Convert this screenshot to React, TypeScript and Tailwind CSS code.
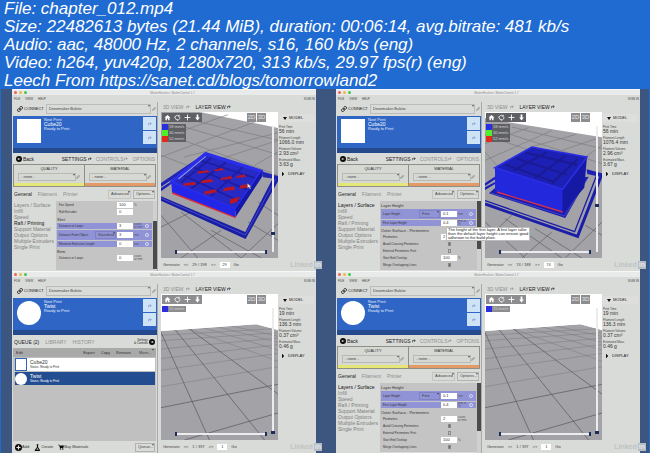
import { ReactNode, useState } from 'react';

type Scene = 'low' | 'tall' | 'empty';

interface Setting {
  label: string;
  size?: 'heading' | 'normal' | 'tall';
  value?: string;
  unit?: string;
  preset?: string;
  changed?: boolean;
  check?: boolean;
}

interface Chapter {
  id: string;
  part: string;
  round?: boolean;
  scene: Scene;
  panel: 'settings' | 'queue';
  category?: string;
  settings?: Setting[];
  thumbClass?: string;
  stats: string[];
  layer: string;
  layerCount: string;
  layerPos: number;
  tooltip?: boolean;
}

const categories = [
  'Layers / Surface',
  'Infill',
  'Speed',
  'Raft / Priming',
  'Support Material',
  'Output Options',
  'Multiple Extruders',
  'Single Print',
];

const raftSettings: Setting[] = [
  { label: 'Fan Speed', value: '100', unit: '%' },
  { label: 'Raft Extruder', value: '0' },
  { label: 'Skirt', size: 'heading' },
  { label: 'Distance or Loops', value: '3', unit: 'count or mm', changed: true },
  { label: 'Distance From Object', size: 'tall', value: '3', unit: 'mm', preset: 'Standard', changed: true },
  { label: 'Minimum Extrusion Length', value: '0', unit: 'mm', changed: true },
  { label: 'Brim', size: 'heading' },
  { label: 'Distance or Loops', value: '0', unit: 'count or mm' },
];

const layerSettings: Setting[] = [
  { label: 'Layer Height', size: 'heading' },
  { label: 'Layer Height', size: 'tall', value: '0.1', unit: 'mm', preset: 'Fine', changed: true },
  { label: 'First Layer Height', value: '0.4', unit: 'mm or %', changed: true },
  { label: 'Outer Surface - Perimeters', size: 'heading' },
  { label: 'Perimeters', value: '2', unit: 'count or mm' },
  { label: 'Avoid Crossing Perimeters', check: true },
  { label: 'External Perimeters First', check: false },
  { label: 'Start End Overlap', value: '100', unit: '%' },
  { label: 'Merge Overlapping Lines', check: true },
];

const chapters: Chapter[] = [
  {
    id: 'a',
    part: 'Cube20',
    scene: 'low',
    panel: 'settings',
    category: 'Raft / Priming',
    settings: raftSettings,
    thumbClass: 'mt-5 h-12',
    stats: ['56 min', '1066.0 mm', '2.93 cm³', '3.63 g'],
    layer: '29',
    layerCount: '29 / 198',
    layerPos: 14,
  },
  {
    id: 'b',
    part: 'Cube20',
    scene: 'tall',
    panel: 'settings',
    category: 'Layers / Surface',
    settings: layerSettings,
    thumbClass: 'h-12',
    stats: ['56 min', '1076.4 mm', '2.96 cm³', '3.67 g'],
    layer: '74',
    layerCount: '74 / 188',
    layerPos: 37,
    tooltip: true,
  },
  {
    id: 'c',
    part: 'Twist',
    round: true,
    scene: 'empty',
    panel: 'queue',
    stats: ['19 min', '136.3 mm', '0.37 cm³', '0.46 g'],
    layer: '1',
    layerCount: '1 / 397',
    layerPos: 0,
  },
  {
    id: 'd',
    part: 'Twist',
    round: true,
    scene: 'empty',
    panel: 'settings',
    category: 'Layers / Surface',
    settings: layerSettings,
    thumbClass: 'h-12',
    stats: ['19 min', '136.3 mm', '0.37 cm³', '0.46 g'],
    layer: '1',
    layerCount: '1 / 397',
    layerPos: 0,
  },
];

function LinkIcon() {
  return (
    <svg className="w-[6px] h-[6px] shrink-0" viewBox="0 0 24 24" fill="none" stroke="#1c1c1c" strokeWidth={4} strokeLinecap="round">
      <path d="M10 14a5 5 0 0 0 7 0l4-4a5 5 0 0 0-7-7l-2 2" />
      <path d="M14 10a5 5 0 0 0-7 0l-4 4a5 5 0 0 0 7 7l2-2" />
    </svg>
  );
}

function PopOutIcon() {
  return (
    <svg className="w-[4px] h-[4px] shrink-0" viewBox="0 0 12 12" fill="none" stroke="currentColor" strokeWidth={2}>
      <path d="M1 10V5h8M6 1l4 4-4 3" />
    </svg>
  );
}

function EditIcon() {
  return (
    <svg className="w-[4px] h-[4px] shrink-0" viewBox="0 0 12 12" fill="none" stroke="#7d7d7d" strokeWidth={2}>
      <path d="M2 10l1-3 6-6 2 2-6 6z" />
    </svg>
  );
}

function ArrowDisc({ flip }: { flip?: boolean }) {
  return (
    <svg className="w-[6px] h-[6px] shrink-0" viewBox="0 0 24 24">
      <circle cx="12" cy="12" r="12" fill="#0b0b0b" />
      <path d={flip ? 'M7 12h9M13 8l4 4-4 4' : 'M17 12H8M11 8l-4 4 4 4'} fill="none" stroke="#e8e8e8" strokeWidth={3} />
    </svg>
  );
}

function PickList({ label, options, className }: { label: string; options: string[]; className: string }) {
  return (
    <span className={`relative flex items-center ${className}`}>
      <select aria-label={label} className="w-full h-full appearance-none bg-transparent pl-[2px] text-[4px] leading-[6px] text-[#444]">
        {options.map((o) => (
          <option key={o}>{o}</option>
        ))}
      </select>
      <svg className="absolute right-0 top-0 w-[2px] h-[2px] pointer-events-none" viewBox="0 0 6 4">
        <path d="M0 0h6L3 4z" fill="#333" />
      </svg>
    </span>
  );
}

function PrintCard({ part, round }: { part: string; round?: boolean }) {
  return (
    <div className="bg-[#2f66c5] border-b-[5px] border-[#24498c] h-[37px] flex items-start pl-1 pr-px ml-px">
      <div className={`mt-[3px] w-6 h-6 shrink-0 bg-white ${round ? 'rounded-full' : ''}`} />
      <div className="ml-[3px] pt-[2px] flex-1 text-[#e4ecfa] text-[4px] leading-[4px]">
        <p>Next Print</p>
        <p className="text-[5px] leading-[5px] text-white">{part}</p>
        <p>Ready to Print</p>
      </div>
      <div className="flex flex-col gap-px pt-px">
        {['Edit part', 'Export part'].map((name) => (
          <button key={name} aria-label={name} className="w-[13px] h-[13px] bg-[#cfe3f7] flex items-center justify-center text-[#6a94cf]">
            <PopOutIcon />
          </button>
        ))}
      </div>
    </div>
  );
}

function SettingRow({ row }: { row: Setting }) {
  if (row.size === 'heading') {
    return <h3 className="h-[7px] flex items-center px-px text-[4px] leading-[4px] text-[#333]">{row.label}</h3>;
  }
  return (
    <label
      className={`flex items-center mx-px mb-px pl-[2px] pr-[2px] text-[3px] leading-[3px] text-[#333] ${
        row.size === 'tall' ? 'h-[10px]' : 'h-[6px]'
      } ${row.changed ? 'bg-[#9094d6]' : ''}`}
    >
      <span className="flex-1">{row.label}</span>
      {row.preset && <PickList label={`${row.label} preset`} options={[row.preset]} className="w-[21px] h-2 mr-px border border-[#7f83c4]" />}
      {row.check === undefined ? (
        <input type="text" defaultValue={row.value} className="w-4 h-[6px] bg-white pl-[2px] text-[4px] leading-[6px] text-[#333]" />
      ) : (
        <span className="w-4 flex justify-center">
          <input
            type="checkbox"
            defaultChecked={row.check}
            className="appearance-none w-[3px] h-[4px] border border-[#8a8a8a] checked:bg-[#6a6a6a]"
          />
        </span>
      )}
      <span className="w-[11px] pl-px text-[#555]">{row.unit}</span>
      <span className="w-[6px] flex justify-center">
        {row.changed && <span className="w-[4px] h-[4px] rounded-full border border-[#d6d8f4]" />}
      </span>
    </label>
  );
}

function SettingsPanel({ chapter }: { chapter: Chapter }) {
  const [category, setCategory] = useState(chapter.category);

  return (
    <>
      <nav className="h-[11px] flex items-center gap-1 pl-1 pr-[2px] text-[5px] leading-[6px] text-[#909090]">
        <button className="mr-auto flex items-center gap-px text-[#222]">
          <ArrowDisc />
          Back
        </button>
        <button className="flex items-center gap-px text-[#222]">SETTINGS<PopOutIcon /></button>
        <button className="flex items-center gap-px">CONTROLS<PopOutIcon /></button>
        <button>OPTIONS</button>
      </nav>

      {/* Presets */}
      <div className="h-[23px] grid grid-cols-2 gap-px border border-[#8f8f88] bg-[#8f8f88] mx-px text-[4px] leading-[6px] text-[#333]">
        <div className="bg-[#d6d8d4] border-b-[3px] border-[#e4e676] pt-px px-1">
          <p className="text-center">QUALITY</p>
          <div className="flex items-center mt-px">
            <PickList label="Quality" options={['- none -']} className="flex-1 h-[8px] border border-[#b9b9b6]" />
            <EditIcon />
          </div>
        </div>
        <div className="bg-[#d6d8d4] border-b-[3px] border-[#e39a66] pt-px px-1">
          <p className="text-center">MATERIAL</p>
          <div className="flex items-center mt-px">
            <PickList label="Material" options={['- none -']} className="flex-1 h-[8px] border border-[#b9b9b6]" />
            <EditIcon />
          </div>
        </div>
      </div>

      <div className="h-[14px] flex items-center gap-[6px] pl-[2px] pr-[2px] text-[5px] leading-[6px] text-[#8d8d8d]">
        <button className="text-[#222]">General</button>
        <button>Filament</button>
        <button>Printer</button>
        <div className="ml-auto flex gap-[2px] text-[4px] text-[#333]">
          <PickList label="Detail level" options={['Advanced']} className="w-[23px] h-[9px] border border-[#c4c4c2]" />
          <PickList label="Options" options={['Options...']} className="w-[22px] h-[9px] border border-[#b2b2b0]" />
        </div>
      </div>

      <div className="h-[70px] flex overflow-hidden">
        <ul className="flex-1 pl-[2px] pt-px text-[5px] leading-[6px] text-[#7f7f7f] whitespace-nowrap">
          {categories.map((name) => (
            <li key={name} className="h-[6px]">
              <button onClick={() => setCategory(name)} className={`block ${name === category ? 'text-[#111]' : ''}`}>
                {name}
              </button>
            </li>
          ))}
        </ul>
        <div className="w-[97px] bg-[#c4c4c4] mb-px pt-px overflow-hidden">
          {chapter.settings?.map((row, i) => (
            <SettingRow key={i} row={row} />
          ))}
        </div>
        <div className="w-[4px] bg-[#d0d0d0]">
          <div className={`bg-[#4b4b4b] ${chapter.thumbClass}`} />
        </div>
      </div>
    </>
  );
}

function QueuePanel() {
  return (
    <>
      <nav className="h-[13px] flex items-center gap-[6px] pl-[2px] pr-[2px] text-[5px] leading-[6px] text-[#909090]">
        <button className="text-[#222]">QUEUE (2)</button>
        <button>LIBRARY</button>
        <button>HISTORY</button>
        <button className="ml-auto flex items-center gap-px text-right text-[3px] leading-[3px] text-[#222]">
          <span>Settings<br />&amp; Controls</span>
          <ArrowDisc flip />
        </button>
      </nav>
      <div className="flex-1 bg-[#c0c0c0] mx-px flex flex-col">
        <div className="h-[9px] bg-[#a9a9a9] flex items-center gap-[6px] pl-[3px] pr-[2px] text-[4px] leading-[6px] text-[#333]">
          <button>Edit</button>
          <button className="ml-auto">Export</button>
          <button>Copy</button>
          <button>Remove</button>
          <PickList label="More" options={['More...']} className="w-[17px] h-2" />
        </div>
        <ul className="p-px pl-[2px] flex flex-col gap-px text-[5px] leading-[5px]">
          <li className="h-[13px] bg-white flex items-center text-[#333]">
            <span className="w-3 h-[13px] border border-[#2d64b8] bg-white" />
            <div className="pl-[3px]">
              <p>Cube20</p>
              <p className="text-[3px] leading-[4px]">Status: Ready to Print</p>
            </div>
          </li>
          <li className="h-[13px] bg-[#234d91] flex items-center text-white">
            <span className="w-3 h-3 rounded-full bg-white" />
            <div className="pl-[3px]">
              <p>Twist</p>
              <p className="text-[3px] leading-[4px]">Status: Ready to Print</p>
            </div>
          </li>
        </ul>
      </div>
      <div className="h-3 flex items-center gap-[5px] pl-[3px] pr-[2px] text-[4px] leading-[6px] text-[#333]">
        <button className="flex items-center">
          <svg className="w-[7px] h-[7px]" viewBox="0 0 24 24">
            <circle cx="12" cy="12" r="12" fill="#0b0b0b" />
            <path d="M12 5v14M5 12h14" stroke="#e8e8e8" strokeWidth={4} />
          </svg>
          Add
        </button>
        <button className="flex items-center">
          <svg className="w-[7px] h-[7px]" viewBox="0 0 24 24" fill="#0b0b0b">
            <path d="M9 1h6v3h-1v7l7 10-2 3H4l-2-3 8-10V4H9z" />
            <path d="M8 19l3-5 5 6z" fill="#dcdcdc" />
          </svg>
          Create
        </button>
        <button className="flex items-center">
          <svg className="w-[6px] h-[6px]" viewBox="0 0 24 24" fill="#0b0b0b">
            <path d="M0 3h5l1 3h18l-3 10H8L4 5H0z" />
            <circle cx="10" cy="20" r="3" />
            <circle cx="19" cy="20" r="3" />
          </svg>
          Buy Materials
        </button>
        <PickList label="Queue" options={['Queue...']} className="ml-auto w-5 h-[9px] border border-[#b2b2b0]" />
      </div>
    </>
  );
}

function PrintBed({ scene }: { scene: Scene }) {
  if (scene === 'empty') {
    return (
      <svg className="w-full h-full" viewBox="0 0 350 438" preserveAspectRatio="none">
        <path d="M0 111L285 91l65 17v330H0z" fill="#a3a2a6" />
        <g stroke="#7c7b80" strokeWidth={1.5} fill="none">
          <path d="M0 124L340 104M0 140L350 116M0 165L350 132M0 194L350 152M0 229L350 178M0 278L350 218" />
          <path d="M85 105L350 202M130 102L350 168M172 99L350 145M212 96L350 127" />
        </g>
        <g stroke="#55545a" strokeWidth={2} fill="none">
          <path d="M0 341L350 271M70 438L350 357M0 115L145 438M43 108L310 438M85 105L350 300" />
        </g>
        <path d="M350 108L285 91 0 111V0h350z" fill="#fff" />
      </svg>
    );
  }

  if (scene === 'low') {
    return (
      <svg className="w-full h-full" viewBox="0 0 350 438" preserveAspectRatio="none">
        <path d="M0 0h116l234 48v390H0z" fill="#a3a2a6" />
        <g stroke="#7c7b80" strokeWidth={2} fill="none">
          <path d="M80 22L350 84M75 46L350 128M0 60L350 190M0 130L130 180M0 80L200 8M0 135L290 26M70 135L350 62M180 140L350 85M280 160L350 120" />
          <path d="M0 310L110 438M60 300L240 438M150 355L300 438M0 345L90 300M60 438L180 355M240 438L350 335M260 330L350 385M290 270L350 310" stroke="#5e5d62" />
        </g>
        {/* skirt */}
        <path d="M0 213L120 132l8 8L0 224zM0 228L34 206v8L0 238zM300 178l50 14v10l-44-6z" fill="#2024b4" />
        <path d="M0 253L252 360 336 196h14v12L253 381 0 266z" fill="#1a1ea6" />
        <path d="M0 258L252 369 344 200" stroke="#5c62d6" strokeWidth={2} fill="none" />
        <path d="M33 238L223 308v11L33 245z" fill="#e0283c" />
        {/* walls and infill */}
        <path d="M31 211L133 125l168 53-78 115z" fill="#2629c4" />
        <g stroke="#1d1d9e" strokeWidth={5} fill="none">
          <path d="M66 190L235 268M96 166L262 235M122 146L286 200M90 230L196 150M150 252L244 166M60 212L150 138" />
        </g>
        <path
          d="M112 178l28-3 6 6-38 4zM158 173l24-5 8 6-30 4zM70 214l30-5 6 9-42 4zM124 205l28-4 5 9-40 4zM180 198l30-6 5 8-38 4zM228 192l22-5 4 8-30 3zM132 238l30-6 6 9-40 7zM190 228l28-5 4 10-38 5zM238 220l26-5-4 12-26 3zM206 262l30-8-8 16-22 6z"
          fill="#b5182a"
        />
        <path d="M31 211L133 125l168 53-78 115z" fill="none" stroke="#2a2eea" strokeWidth={10} strokeLinejoin="round" />
        <path d="M52 201L134 133" stroke="#9296e6" strokeWidth={3} />
        <path d="M31 213L223 290v25L33 240z" fill="#2226e8" />
        <path d="M223 290L301 178l3 14-80 122z" fill="#1418aa" />
        <path d="M258 214l1 15 4-4 3 7 3-2-3-6h5z" fill="#e8e8f4" stroke="#333" strokeWidth={1} />
      </svg>
    );
  }

  return (
    <svg className="w-full h-full" viewBox="0 0 350 438" preserveAspectRatio="none">
      <path d="M0 18L70 31 350 76v362H0z" fill="#a3a2a6" />
      <g stroke="#7c7b80" strokeWidth={2} fill="none">
        <path d="M80 45L350 110M60 62L350 155M0 70L180 130M0 120L40 165M0 95L130 47M0 145L200 56M140 104L270 68M230 115L340 78M300 135L350 100" />
        <path d="M0 330L120 438M60 320L230 438M150 350L290 438M0 385L80 310M110 438L200 360M240 438L350 330M300 340L350 370" stroke="#5e5d62" />
      </g>
      <path d="M0 214L36 190v8L0 222zM0 226l30-16v6L0 234zM304 172l46 12v12l-44-10z" fill="#1c20b8" />
      <path d="M0 276L277 373 348 190" fill="none" stroke="#1a1ea8" strokeWidth={9} />
      <path d="M0 266L268 359 334 190" fill="none" stroke="#1a1ea8" strokeWidth={4} />
      <path d="M12 244L30 228l280-34L240 318z" fill="#1a1eb0" />
      <path d="M18 243L238 312 308 198" fill="none" stroke="#5257cf" strokeWidth={2} />
      <path d="M30 167L232 232v68L30 236z" fill="#2428dc" />
      <path d="M232 232l73-97-8 92-65 75z" fill="#1619a4" />
      <path d="M30 167L140 105l165 30-73 97z" fill="#1d20b4" />
      <path d="M62 158L210 211M95 140L244 188M122 122L276 158M85 176L184 121M150 198L240 132M200 214L276 142" stroke="#1a1a92" strokeWidth={6} fill="none" />
      <path d="M30 167L140 105l165 30-73 97z" fill="none" stroke="#2a2ee4" strokeWidth={5} />
      <path d="M36 240L232 300" stroke="#d8304e" strokeWidth={4} />
    </svg>
  );
}

const thumb =
  '[&::-webkit-slider-thumb]:appearance-none [&::-webkit-slider-thumb]:bg-[#1c2c58] [&::-webkit-slider-thumb]:pointer-events-auto';

function ViewTools({ dark }: { dark: boolean }) {
  const tone = dark ? 'bg-[#5f6064]' : 'bg-[#8d8d8f]';
  const shapes: [string, ReactNode][] = [
    ['Home', <path key="p" d="M12 3L2 12h3v9h5v-6h4v6h5v-9h3z" fill="#fff" />],
    ['Rotate', <path key="p" d="M5 8a8 8 0 0 1 13-1M20 10a8 8 0 0 1-5 10M11 20a8 8 0 0 1-7-8M18 3v5h-5M12 17l2 4-4 1M7 10l-3-2-2 5" fill="none" stroke="#fff" strokeWidth={2.5} />],
    ['Pan', <path key="p" d="M12 2v20M2 12h20" stroke="#fff" strokeWidth={3} />],
    ['Zoom', <path key="p" d="M9 2h6v10h5l-8 10-8-10h5z" fill="#fff" />],
  ];

  return (
    <>
      <div className={`absolute left-px top-px flex ${tone}`}>
        {shapes.map(([name, shape]) => (
          <button key={name} aria-label={name} className="w-[10px] h-[9px] flex items-center justify-center">
            <svg className="w-[7px] h-[7px]" viewBox="0 0 24 24">{shape}</svg>
          </button>
        ))}
      </div>
      <div className="absolute right-3 top-px flex gap-px text-[6px] leading-[9px] text-[#e4e4e4]">
        <button className="w-[9px] bg-[#8d8d8f]">2D</button>
        <button className="w-[9px] bg-[#8d8d8f]">3D</button>
      </div>
    </>
  );
}

function Viewer({ chapter }: { chapter: Chapter }) {
  const dark = chapter.scene !== 'empty';
  const speeds = dark
    ? [
        ['18 mm/s', 'bg-[#2a2ee0]'],
        ['30 mm/s', 'bg-[#4df02a]'],
        ['52 mm/s', 'bg-[#e02a1c]'],
      ]
    : [['15 mm/s', 'bg-[#2a2ee0]']];
  const labels = ['Print Time', 'Filament Length', 'Filament Volume', 'Estimated Mass'];

  return (
    <div className="flex-1 min-w-0 flex flex-col pl-[3px]">
      <nav className="h-[10px] flex items-center gap-[6px] pl-[2px] text-[5px] leading-[6px] text-[#8d8d8d]">
        <button className="flex items-center gap-[2px]">3D VIEW<PopOutIcon /></button>
        <button className="flex items-center gap-px text-[#222]">LAYER VIEW<PopOutIcon /></button>
      </nav>
      <div className="flex-1 min-h-0 flex">
        <div className="relative flex-1 min-w-0 bg-white">
          <div className="absolute inset-0">
            <PrintBed scene={chapter.scene} />
          </div>
          <ViewTools dark={dark} />
          <ul className={`absolute left-px top-3 ${dark ? 'bg-[#5f6064]' : 'bg-[#8d8d8f]'} text-[4px] leading-[6px] text-[#d4d4d4]`}>
            {speeds.map(([speed, color]) => (
              <li key={speed} className="flex h-[6px] w-[24px] whitespace-nowrap">
                <span className={`w-[6px] mr-px ${color}`} />
                {speed}
              </li>
            ))}
          </ul>
          <input
            type="range"
            aria-label="Layer"
            defaultValue={chapter.layerPos}
            className={`absolute right-[4px] top-[14px] bottom-[6px] w-[2px] appearance-none bg-[#ececee] [writing-mode:vertical-lr] [direction:rtl] [&::-webkit-slider-thumb]:w-[4px] [&::-webkit-slider-thumb]:h-[3px] [&::-webkit-slider-thumb]:-ml-px ${thumb}`}
          />
          {[0, 100].map((end) => (
            <input
              key={end}
              type="range"
              aria-label={end ? 'Range end' : 'Range start'}
              defaultValue={end}
              className={`absolute left-[14px] w-[92px] bottom-[5px] h-[2px] appearance-none pointer-events-none [&::-webkit-slider-thumb]:w-[2px] [&::-webkit-slider-thumb]:h-[4px] ${
                end ? 'bg-transparent' : 'bg-[#ececee]'
              } ${thumb}`}
            />
          ))}
        </div>
        <aside className="w-[38px] pl-px pr-[2px] pt-[2px] text-[3px] leading-[4px] text-[#444]">
          <h2 className="mb-[3px] flex items-center gap-[2px] pl-1 h-[8px] bg-[#dedfdd] text-[4px] text-[#222]">
            <svg className="w-[4px] h-[3px]" viewBox="0 0 8 6"><path d="M0 0h8L4 6z" fill="#111" /></svg>
            MODEL
          </h2>
          <dl>
            {labels.map((label, i) => (
              <div key={label} className="h-[11px] whitespace-nowrap">
                <dt>{label}</dt>
                <dd className="text-[5px] leading-[5px] text-[#333]">{chapter.stats[i]}</dd>
              </div>
            ))}
          </dl>
          <h2 className="mt-[3px] flex items-center gap-1 pl-[3px] text-[4px] text-[#222]">
            <svg className="w-[2px] h-[4px]" viewBox="0 0 4 8"><path d="M0 0l4 4-4 4z" fill="#111" stroke="#111" /></svg>
            DISPLAY
          </h2>
        </aside>
      </div>
      <div className="h-[13px] flex items-center gap-1 pl-[2px] text-[4px] leading-[6px] text-[#444] whitespace-nowrap">
        <button>Generate</button>
        <button aria-label="Previous layer">&lt;&lt;</button>
        <span>{chapter.layerCount}</span>
        <button aria-label="Next layer">&gt;&gt;</button>
        <input type="text" aria-label="Go to layer" defaultValue={chapter.layer} className="w-[10px] h-[6px] bg-white text-center" />
        <button>Go</button>
        <span className="ml-auto -mr-[6px] z-10 flex items-center text-[7px] leading-[8px] font-bold text-[#bfc3c3]">
          Linked<span className="ml-px bg-[#b4bcc6] px-px text-[#e4e6e6]">in</span>
        </span>
      </div>
    </div>
  );
}

function ControlWindow({ chapter }: { chapter: Chapter }) {
  return (
    <section className="bg-[#3c5680] pl-[11px] pr-[9px]">
      <div className="relative bg-[#d9dbd8] flex flex-col h-full">
        <div className="h-[6px] bg-[#e9eaea] border-t border-[#f6f6f6] flex items-center pl-[2px] gap-[2px]">
          <span className="w-[3px] h-[3px] rounded-full bg-[#f0605c]" />
          <span className="w-[3px] h-[3px] rounded-full bg-[#f2b83a]" />
          <span className="w-[3px] h-[3px] rounded-full bg-[#3fc84a]" />
          <p className="flex-1 text-center text-[3px] leading-[4px] text-[#8b8b8b]">MatterHackers: MatterControl 1.7</p>
        </div>
        <div className="h-[7px] flex items-center gap-[5px] pl-[2px] pr-px text-[3px] leading-[4px] text-[#444]">
          <button>FILE</button>
          <button>VIEW</button>
          <button>HELP</button>
          <button className="ml-auto">SIGN IN</button>
        </div>
        <div className="flex-1 flex">
          <div className="w-[146px] shrink-0 flex flex-col border-r border-[#a9aaa8]">
            <div className="h-[14px] flex items-center gap-px pl-[5px] pr-px text-[4px] leading-[6px] text-[#222]">
              <button className="flex items-center gap-px">
                <LinkIcon />
                CONNECT
              </button>
              <PickList label="Printer" options={['Deezmaker Bukito']} className="ml-px flex-1 h-[10px] border border-[#bcbcba]" />
              <EditIcon />
            </div>
            <PrintCard part={chapter.part} round={chapter.round} />
            {chapter.panel === 'queue' ? <QueuePanel /> : <SettingsPanel chapter={chapter} />}
          </div>
          <Viewer chapter={chapter} />
        </div>
        {chapter.tooltip && (
          <p
            role="tooltip"
            className="absolute left-[110px] top-[138px] z-10 bg-white border border-[#bbb] px-px text-[4px] leading-[4px] text-[#222] whitespace-nowrap"
          >
            The height of the first layer. A first layer taller
            <br />
            than the default layer height can ensure good
            <br />
            adhesion to the build plate.
          </p>
        )}
      </div>
    </section>
  );
}

export default function App() {
  return (
    <main className="min-h-screen bg-[#1f6bd1] font-['Liberation_Sans',sans-serif]">
      <header className="h-[89px] pl-1 text-[17px] leading-[18px] italic text-white whitespace-nowrap">
        <p>File: chapter_012.mp4</p>
        <p>Size: 22482613 bytes (21.44 MiB), duration: 00:06:14, avg.bitrate: 481 kb/s</p>
        <p>Audio: aac, 48000 Hz, 2 channels, s16, 160 kb/s (eng)</p>
        <p>Video: h264, yuv420p, 1280x720, 313 kb/s, 29.97 fps(r) (eng)</p>
        <p>Leech From https://sanet.cd/blogs/tomorrowland2</p>
      </header>
      <div className="grid grid-cols-2 px-px">
        {chapters.map((chapter) => (
          <ControlWindow key={chapter.id} chapter={chapter} />
        ))}
      </div>
    </main>
  );
}
